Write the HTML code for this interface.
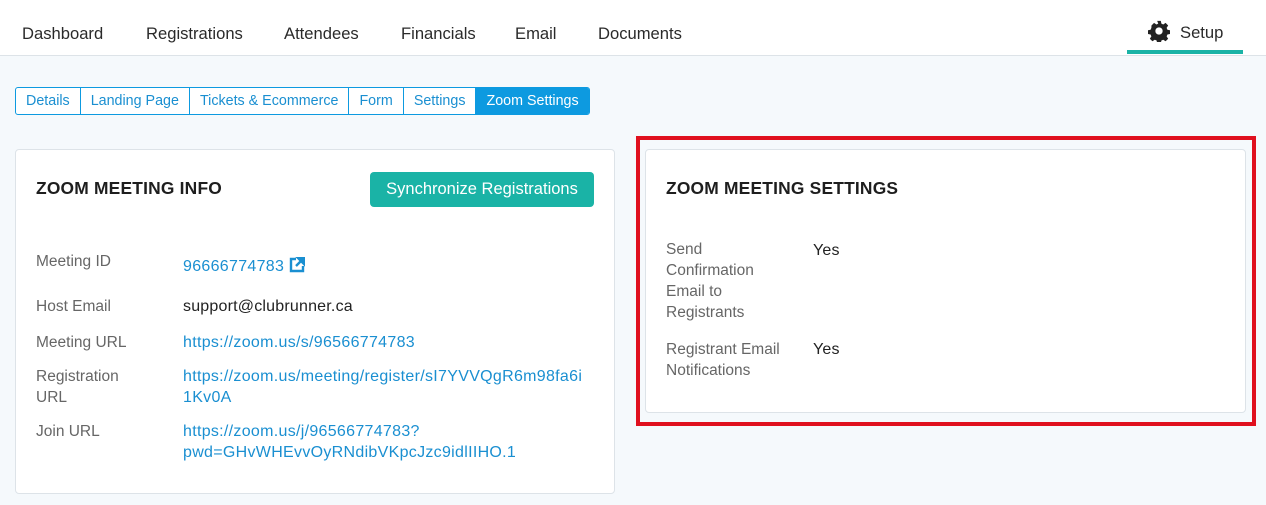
<!DOCTYPE html><html><head><style>
body{margin:0;width:1266px;height:505px;background:#f5f9fc;font-family:"Liberation Sans",sans-serif;position:relative;overflow:hidden}
.a{position:absolute;white-space:nowrap}
.nav{position:absolute;left:0;top:0;width:1266px;height:55px;background:#fff;border-bottom:1px solid #dde3e8}
.nav span{position:absolute;top:24px;font-size:16.6px;color:#2a2a2a}
.tabs{position:absolute;left:15px;top:87px;height:26px;display:flex;border:1px solid #0d9ae0;border-radius:3px;overflow:hidden;background:#fff}
.tabs div{font-size:14.3px;color:#1a8fd1;padding:0 10px;line-height:27px;border-right:1px solid #0d9ae0}
.tabs div:last-child{border:none;background:#0d9ae0;color:#fff}
.card{position:absolute;background:#fff;border:1px solid #dde3e8;border-radius:4px}
.h{font-size:17.4px;font-weight:bold;color:#1e1e1e;letter-spacing:.2px}
.l{font-size:15.5px;color:#666;line-height:21px}
.v{font-size:16px;color:#1a8fd1;line-height:21px;letter-spacing:.3px}
.k{font-size:16px;color:#222;line-height:21px;letter-spacing:.2px}
</style></head><body>
<div class="nav">
<span style="left:22px">Dashboard</span><span style="left:146px">Registrations</span><span style="left:284px">Attendees</span><span style="left:401px">Financials</span><span style="left:515px">Email</span><span style="left:598px">Documents</span>
<svg style="position:absolute;left:1148px;top:20px" width="22" height="22" viewBox="0 0 24 24"><path fill="#222" d="M10 1h4l.6 3 2 .9 2.6-1.7 2.8 2.8-1.7 2.6.9 2 3 .6v4l-3 .6-.9 2 1.7 2.6-2.8 2.8-2.6-1.7-2 .9-.6 3h-4l-.6-3-2-.9-2.6 1.7-2.8-2.8 1.7-2.6-.9-2-3-.6v-4l3-.6.9-2L3.8 6l2.8-2.8 2.6 1.7 2-.9zM12 8a4 4 0 100 8 4 4 0 000-8z"/></svg>
<span style="left:1180px;top:23px">Setup</span>
<div style="position:absolute;left:1127px;top:50px;width:116px;height:4px;background:#1ab3a6"></div>
</div>
<div class="tabs"><div>Details</div><div>Landing Page</div><div>Tickets &amp; Ecommerce</div><div>Form</div><div>Settings</div><div>Zoom Settings</div></div>
<div class="card" style="left:15px;top:149px;width:598px;height:343px"></div>
<div class="a h" style="left:36px;top:178px">ZOOM MEETING INFO</div>
<div class="a" style="left:370px;top:172px;width:224px;height:35px;background:#1ab3a6;border-radius:4px;color:#fff;font-size:16.5px;line-height:35px;text-align:center">Synchronize Registrations</div>
<div class="a l" style="left:36px;top:251px">Meeting ID</div>
<div class="a v" style="left:183px;top:256px">96666774783 <svg width="16" height="16" viewBox="0 0 16 16" style="vertical-align:-2px"><path d="M7 2H2v12h12V9" fill="none" stroke="#1a8fd1" stroke-width="2.4"/><path d="M9 1h6v6zM15 1L7 9" stroke="#1a8fd1" stroke-width="2.4" fill="#1a8fd1"/></svg></div>
<div class="a l" style="left:36px;top:296px">Host Email</div>
<div class="a k" style="left:183px;top:296px">support@clubrunner.ca</div>
<div class="a l" style="left:36px;top:332px">Meeting URL</div>
<div class="a v" style="left:183px;top:332px">https://zoom.us/s/96566774783</div>
<div class="a l" style="left:36px;top:366px">Registration<br>URL</div>
<div class="a v" style="left:183px;top:366px">https://zoom.us/meeting/register/sI7YVVQgR6m98fa6i<br>1Kv0A</div>
<div class="a l" style="left:36px;top:421px">Join URL</div>
<div class="a v" style="left:183px;top:421px">https://zoom.us/j/96566774783?<br>pwd=GHvWHEvvOyRNdibVKpcJzc9idlIIHO.1</div>
<div style="position:absolute;left:636px;top:136px;width:612px;height:282px;border:4px solid #e0101e"></div>
<div class="card" style="left:645px;top:149px;width:599px;height:262px"></div>
<div class="a h" style="left:666px;top:178px">ZOOM MEETING SETTINGS</div>
<div class="a l" style="left:666px;top:239px">Send<br>Confirmation<br>Email to<br>Registrants</div>
<div class="a k" style="left:813px;top:240px">Yes</div>
<div class="a l" style="left:666px;top:339px">Registrant Email<br>Notifications</div>
<div class="a k" style="left:813px;top:339px">Yes</div>
</body></html>
